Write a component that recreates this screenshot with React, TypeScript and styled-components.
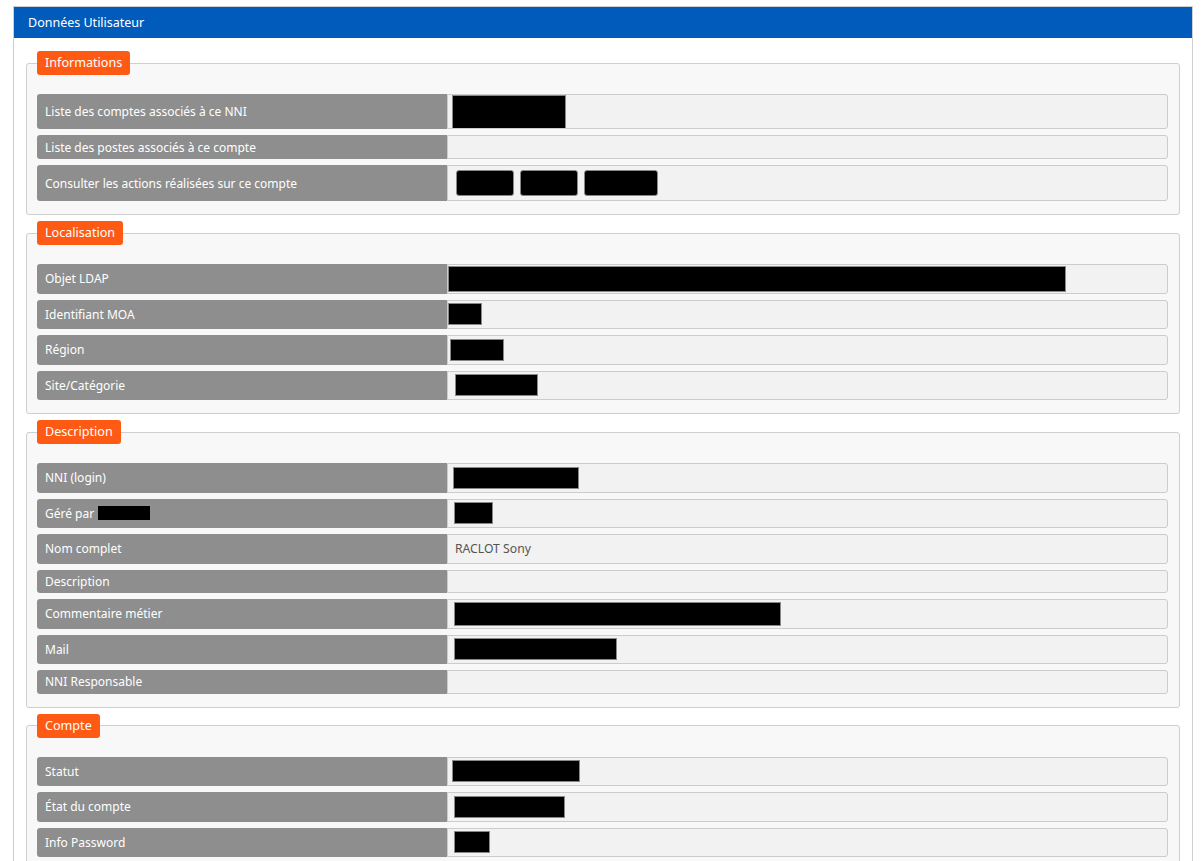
import React from 'react';
import styled, {createGlobalStyle} from 'styled-components';

type Redaction = {w: number; h: number; x?: number; round?: boolean};

type Field = {
    label: string;
    labelMask?: number;
    value?: string;
    masks?: Redaction[];
    height?: number;
};

type Section = {title: string; fields: Field[]};

const sections: Section[] = [
    {
        title: 'Informations',
        fields: [
            {label: 'Liste des comptes associés à ce NNI', masks: [{w: 114, h: 34, x: 4}], height: 35},
            {label: 'Liste des postes associés à ce compte', height: 24},
            {
                label: 'Consulter les actions réalisées sur ce compte',
                masks: [
                    {w: 58, h: 26, x: 8, round: true},
                    {w: 58, h: 26, x: 6, round: true},
                    {w: 74, h: 26, x: 6, round: true},
                ],
                height: 36,
            },
        ],
    },
    {
        title: 'Localisation',
        fields: [
            {label: 'Objet LDAP', masks: [{w: 618, h: 26, x: 0}]},
            {label: 'Identifiant MOA', masks: [{w: 34, h: 22, x: 0}]},
            {label: 'Région', masks: [{w: 54, h: 22, x: 2}]},
            {label: 'Site/Catégorie', masks: [{w: 83, h: 22, x: 7}]},
        ],
    },
    {
        title: 'Description',
        fields: [
            {label: 'NNI (login)', masks: [{w: 126, h: 22, x: 5}]},
            {label: 'Géré par', labelMask: 52, masks: [{w: 39, h: 22, x: 6}]},
            {label: 'Nom complet', value: 'RACLOT Sony'},
            {label: 'Description', height: 23.5},
            {label: 'Commentaire métier', masks: [{w: 327, h: 24, x: 6}]},
            {label: 'Mail', masks: [{w: 163, h: 22, x: 6}]},
            {label: 'NNI Responsable', height: 23.5},
        ],
    },
    {
        title: 'Compte',
        fields: [
            {label: 'Statut', masks: [{w: 128, h: 22, x: 4}]},
            {label: 'État du compte', masks: [{w: 111, h: 22, x: 6}]},
            {label: 'Info Password', masks: [{w: 36, h: 22, x: 6}]},
        ],
    },
];

export default function App() {
    return (
        <>
            <GlobalStyle />
            <Panel>
                <PanelHeader>Données Utilisateur</PanelHeader>
                <PanelBody>
                    {sections.map((section) => (
                        <Group key={section.title}>
                            <Legend>{section.title}</Legend>
                            <Rows>
                                {section.fields.map((field) => (
                                    <Row key={field.label} $height={field.height ?? 29.5}>
                                        <Label>
                                            {field.label}
                                            {field.labelMask && <LabelMask $w={field.labelMask} />}
                                        </Label>
                                        <Value>
                                            {field.value}
                                            {field.masks?.map((m, i) => (
                                                <Mask key={i} $w={m.w} $h={m.h} $x={m.x ?? 0} $round={!!m.round} />
                                            ))}
                                        </Value>
                                    </Row>
                                ))}
                            </Rows>
                        </Group>
                    ))}
                </PanelBody>
            </Panel>
        </>
    );
}

const GlobalStyle = createGlobalStyle`
    body {
        margin: 6px 11px 0 13px;
        background: #fff;
        font-family: "Noto Sans", "Open Sans", sans-serif;
        font-size: 12px;
    }
`;

const Panel = styled.div`
    border: 1px solid #cfcfcf;
    border-bottom: none;
    background: #fff;
`;

const PanelHeader = styled.div`
    height: 31px;
    display: flex;
    align-items: center;
    padding-left: 14px;
    background: #005bbb;
    color: #fff;
    font-size: 12.5px;
`;

const PanelBody = styled.div`
    padding: 13px 12px 0 12px;
`;

const Group = styled.fieldset`
    margin: 0 0 6px 0;
    padding: 0 11px 13px 10px;
    border: 1px solid #cfcfcf;
    border-radius: 3px;
    background: #f8f8f8;
    min-width: 0;
`;

const Legend = styled.legend`
    margin: 0;
    padding: 0 8px;
    height: 24px;
    line-height: 24px;
    background: #ff5a14;
    color: #fff;
    font-size: 12.6px;
    border-radius: 3px;
`;

const Rows = styled.div`
    display: flex;
    flex-direction: column;
    gap: 6px;
    padding-top: 19px;
`;

const Row = styled.div<{$height: number}>`
    display: grid;
    grid-template-columns: 410px 1fr;
    height: ${({$height}) => $height}px;
`;

const Label = styled.div`
    display: flex;
    align-items: center;
    padding-left: 8px;
    background: #8e8e8e;
    color: #fff;
    border-radius: 3px 0 0 3px;
    white-space: nowrap;
`;

const LabelMask = styled.span<{$w: number}>`
    display: inline-block;
    width: ${({$w}) => $w}px;
    height: 14px;
    margin-left: 4px;
    background: #000;
`;

const Value = styled.div`
    display: flex;
    align-items: center;
    padding-left: 7px;
    background: #f2f2f2;
    border: 1px solid #cccccc;
    border-radius: 0 3px 3px 0;
    color: #555;
    font-size: 12.2px;
    overflow: hidden;
`;

const Mask = styled.span<{$w: number; $h: number; $x: number; $round: boolean}>`
    flex: none;
    box-sizing: border-box;
    width: ${({$w}) => $w}px;
    height: ${({$h}) => $h}px;
    margin-left: ${({$x}) => $x}px;
    background: #000;
    border: 1px solid #888;
    border-radius: ${({$round}) => ($round ? '3px' : '0')};

    &:first-child {
        margin-left: ${({$x}) => $x - 7}px;
    }
`;
